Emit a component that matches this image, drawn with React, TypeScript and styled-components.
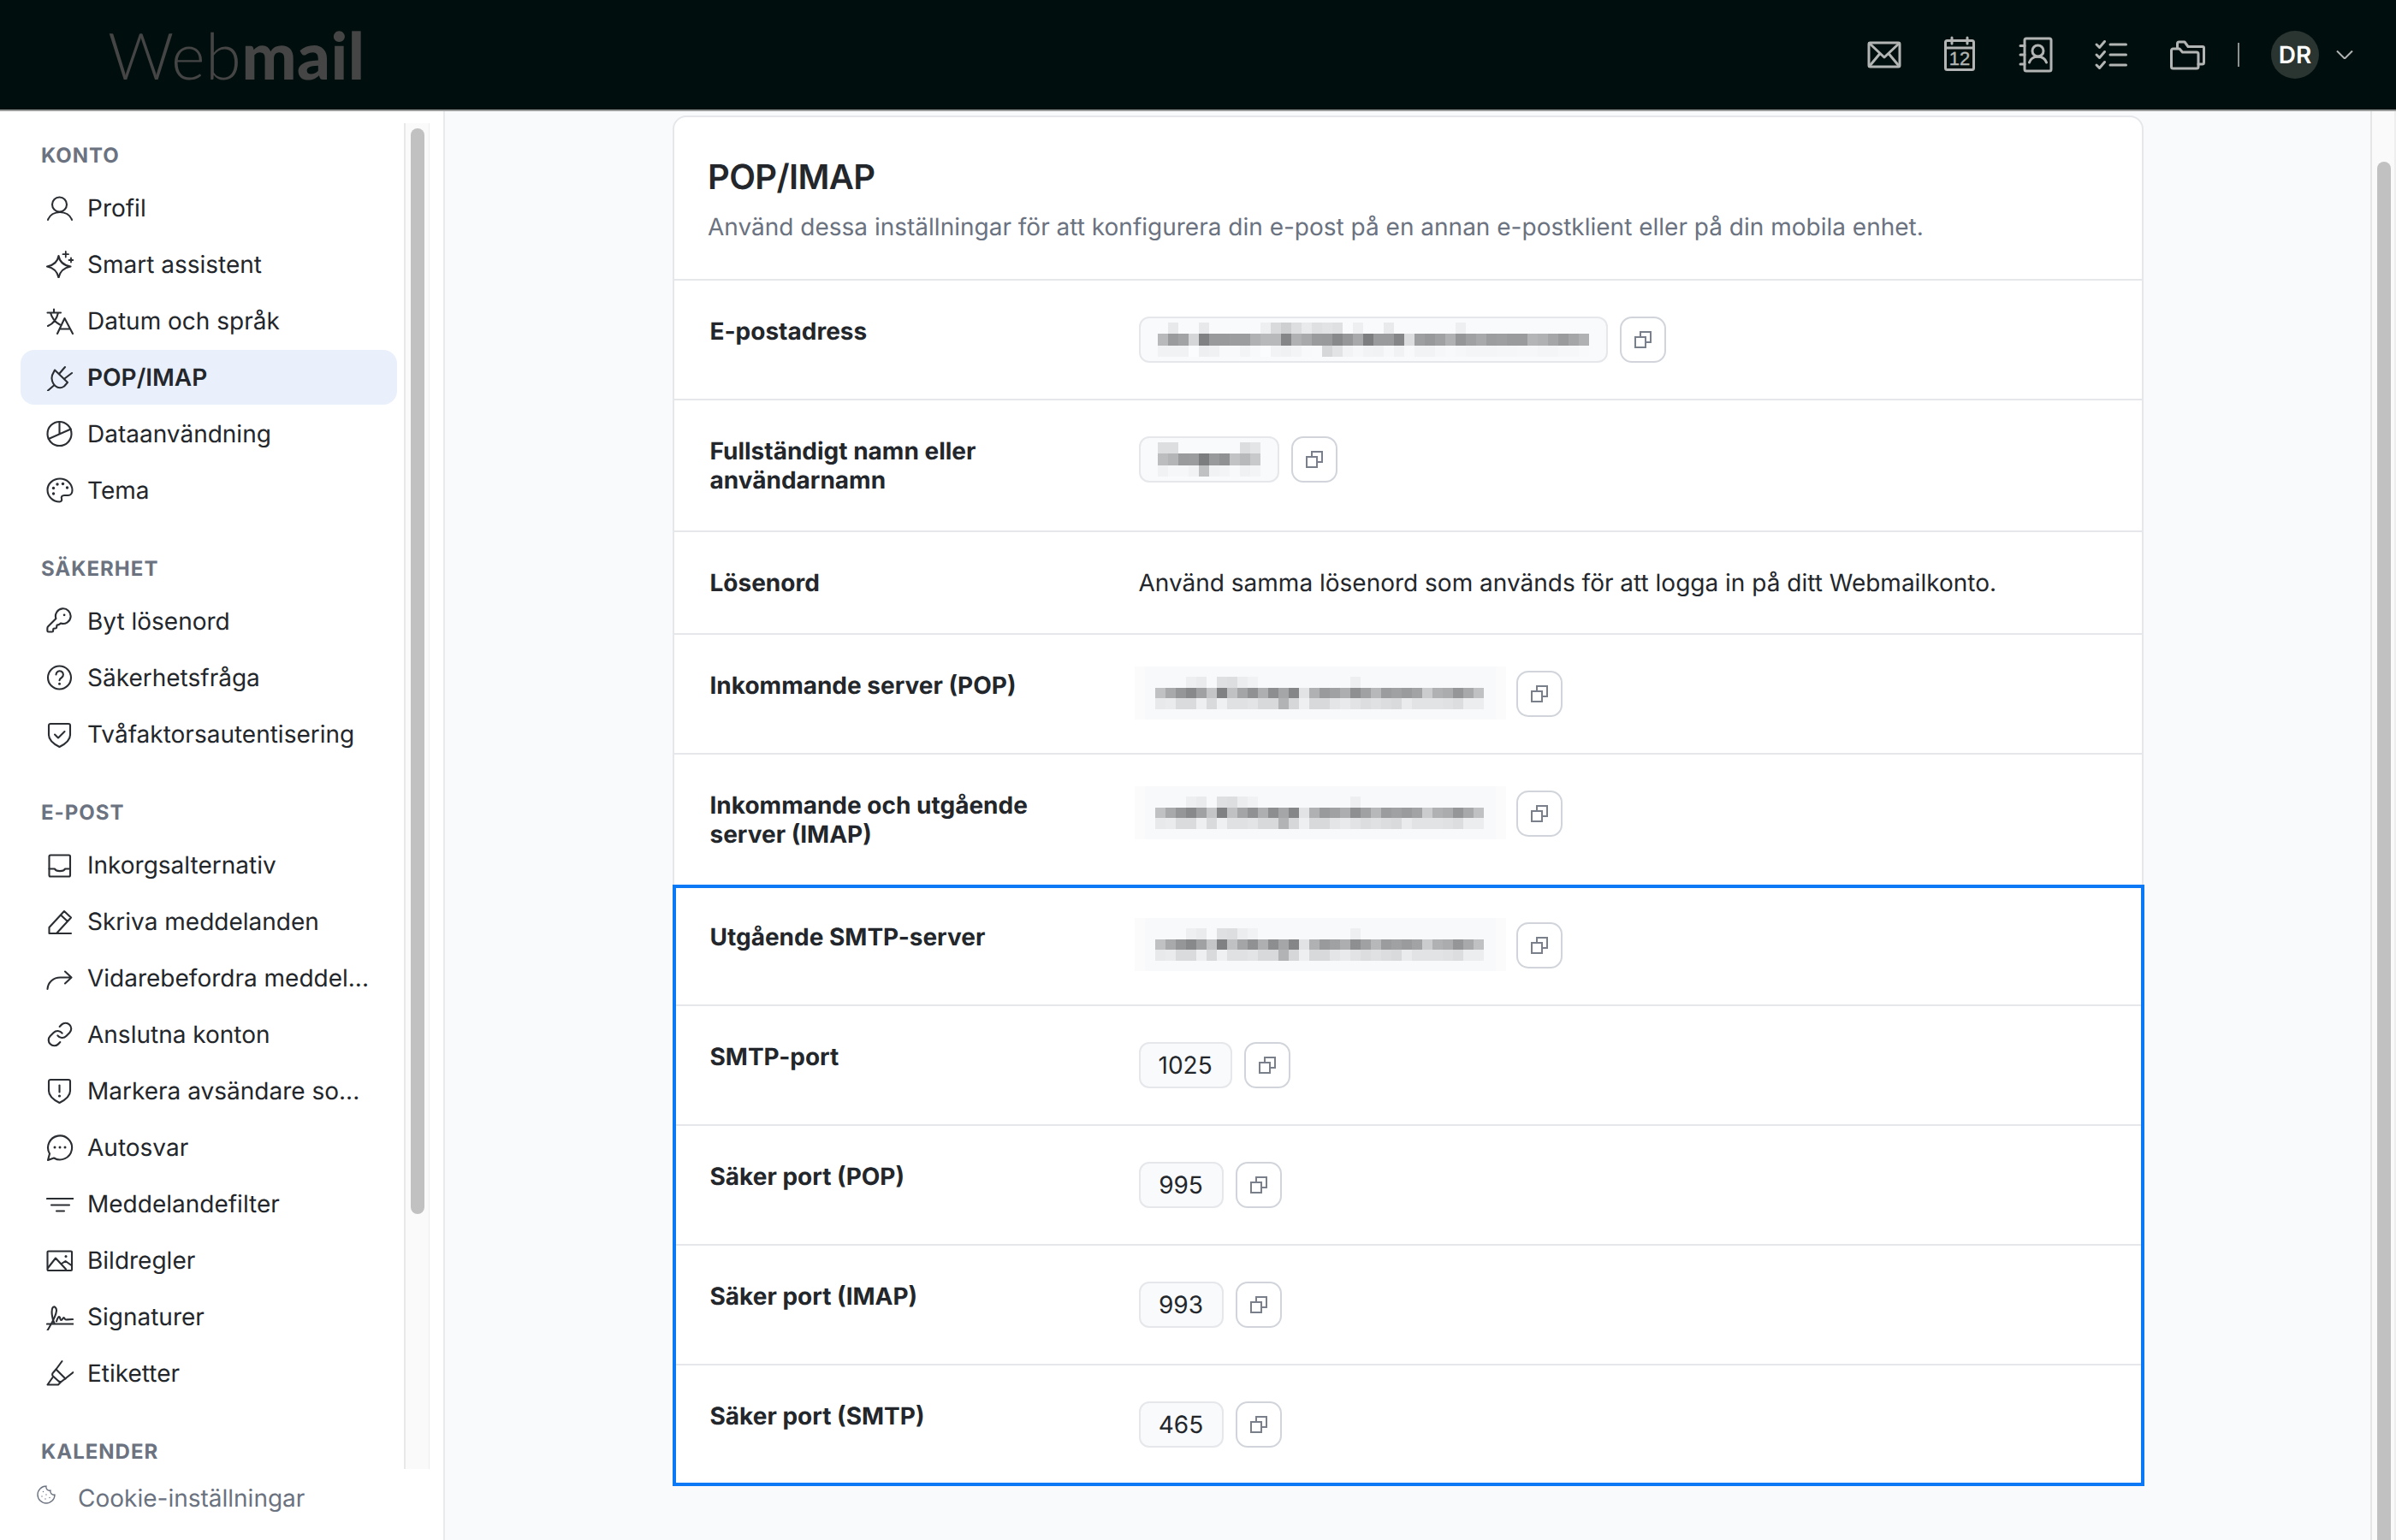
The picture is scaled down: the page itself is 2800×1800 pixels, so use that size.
import React from "react";
import styled, { createGlobalStyle } from "styled-components";

const Global = createGlobalStyle`
  html, body { margin: 0; padding: 0; background: #f9fafb; }
  body { font-family: Inter, "Liberation Sans", sans-serif; color: #23272b; text-rendering: geometricPrecision; }
  * { box-sizing: border-box; }
`;

const Page = styled.div`
  width: 2800px;
  height: 1800px;
  display: flex;
  flex-direction: column;
  overflow: hidden;
`;

const Header = styled.header`
  height: 130px;
  flex: none;
  background: #000f0d;
  border-bottom: 2px solid #999b9b;
  display: flex;
  align-items: center;
  justify-content: space-between;
  padding: 0 50px 0 126px;
`;

const Logo = styled.div`
  font-family: Lato, sans-serif;
  font-size: 76px;
  line-height: 1;
  color: #454545;
  font-weight: 300;
  letter-spacing: 0.5px;
  padding-top: 2px;
  b { font-weight: 900; }
`;

const Toolbar = styled.div`
  display: flex;
  align-items: center;
`;

const ToolIcon = styled.svg`
  width: 44px;
  height: 44px;
  margin-right: 44.5px;
  fill: none;
  stroke: #b2b5b3;
  stroke-width: 3;
  stroke-linecap: round;
  stroke-linejoin: round;
  text {
    fill: #b2b5b3;
    stroke: #b2b5b3;
    stroke-width: 0.4;
    font-family: "Liberation Sans Narrow", "Liberation Sans", sans-serif;
    font-size: 22px;
    font-weight: 400;
  }
`;

const ToolDivider = styled.div`
  width: 2px;
  height: 28px;
  background: #8c908e;
  margin: 0 37px 0 -7px;
`;

const Avatar = styled.div`
  width: 56px;
  height: 56px;
  border-radius: 50%;
  background: #2a3532;
  color: #fff;
  font-size: 28px;
  font-weight: 600;
  display: flex;
  align-items: center;
  justify-content: center;
`;

const Chevron = styled.svg`
  width: 20px;
  height: 10px;
  margin-left: 20px;
  fill: none;
  stroke: #b2b5b3;
  stroke-width: 2;
`;

const Body = styled.div`
  flex: 1;
  display: flex;
  min-height: 0;
`;

const Sidebar = styled.aside`
  width: 520px;
  flex: none;
  background: #fff;
  border-right: 2px solid #e8eaee;
  display: flex;
  flex-direction: column;
`;

const SideScroll = styled.div`
  flex: none;
  height: 1573px;
  margin-top: 14px;
  display: flex;
  overflow: hidden;
`;

const Nav = styled.nav`
  width: 472px;
  padding: 22px 8px 0 24px;
`;

const Section = styled.section`
  margin-bottom: 44px;
`;

const SectionTitle = styled.h3`
  margin: 0 0 13px;
  padding-left: 24px;
  font-size: 24px;
  line-height: 32px;
  font-weight: 700;
  letter-spacing: 1px;
  color: #6b7280;
`;

const NavItem = styled.a<{ $active?: boolean }>`
  height: 64px;
  margin-bottom: 2px;
  padding-left: 30px;
  display: flex;
  align-items: center;
  gap: 16px;
  border-radius: 16px;
  font-size: 28px;
  white-space: nowrap;
  font-weight: ${(p) => (p.$active ? 600 : 400)};
  background: ${(p) => (p.$active ? "#e9f0fb" : "transparent")};
  color: #23272b;
`;

const NavIcon = styled.svg`
  width: 32px;
  height: 32px;
  flex: none;
  fill: none;
  stroke: #2a2e33;
  stroke-width: 2.1;
  stroke-linecap: round;
  stroke-linejoin: round;
  circle.dot { fill: #2a2e33; stroke: none; }
`;

const SideTrack = styled.div`
  width: 30px;
  flex: none;
  background: #fafafa;
  border-left: 2px solid #e8e8e8;
  border-right: 1px solid #eeeeee;
  padding: 6px 0 0 6px;
`;

const Thumb = styled.div<{ $h: number }>`
  width: 16px;
  height: ${(p) => p.$h}px;
  border-radius: 8px;
  background: #c1c1c1;
`;

const SideFooter = styled.div`
  flex: 1;
  padding: 19px 0 0 42px;
  display: flex;
  align-items: flex-start;
  gap: 25px;
  font-size: 28px;
  line-height: 36px;
  color: #6b7280;
`;

const CookieIcon = styled.svg`
  width: 24px;
  height: 24px;
  flex: none;
  fill: none;
  stroke: #6b7280;
  stroke-width: 1.4;
  stroke-linecap: round;
  stroke-linejoin: round;
  margin-top: -1px;
`;

const FooterText = styled.span`
  margin-top: -3px;
`;

const Main = styled.main`
  flex: 1;
  min-width: 0;
  display: flex;
  background: #f9fafb;
`;

const Content = styled.div`
  flex: 1;
  padding: 5px 265px 0 266px;
`;

const MainTrack = styled.div`
  width: 30px;
  flex: none;
  background: #fafafa;
  border-left: 2px solid #e6e6e6;
  border-right: 2px solid #eeeeee;
  padding: 59px 0 0 6px;
`;

const Card = styled.div`
  background: #fff;
  border: 2px solid #e5e7eb;
  border-radius: 16px 16px 0 0;
`;

const CardHead = styled.div`
  padding: 46px 39px 41px;
  border-bottom: 2px solid #e5e7eb;
`;

const Title = styled.h1`
  margin: 0;
  font-size: 40px;
  line-height: 48px;
  font-weight: 600;
  letter-spacing: -0.6px;
  color: #23272b;
`;

const Subtitle = styled.p`
  margin: 14px 0 0;
  font-size: 28px;
  line-height: 40px;
  color: #6b7280;
`;

const Row = styled.div`
  display: grid;
  grid-template-columns: 501px 1fr;
  padding: 42px 42px 42px 41.5px;
  border-bottom: 2px solid #e5e7eb;
  &:last-child { border-bottom: 0; }
`;

const Highlight = styled.div`
  margin: 0 -3px -2px -2px;
  border: 4px solid #0b78f5;
  ${Row} { padding-left: 39.5px; }
  ${Row}:first-child { padding-top: 40px; }
  ${Row}:last-child { padding-bottom: 41px; }
`;

const Label = styled.div`
  font-size: 28px;
  line-height: 34px;
  font-weight: 650;
  color: #23272b;
  max-width: 420px;
`;

const Value = styled.div`
  display: flex;
  align-items: flex-start;
  gap: 14px;
  font-size: 28px;
  line-height: 34px;
  color: #23272b;
`;

const Pill = styled.div`
  height: 54px;
  min-width: 99px;
  padding: 0 20px;
  display: flex;
  align-items: center;
  justify-content: center;
  background: #f9fafb;
  border: 2px solid #e5e7eb;
  border-radius: 12px;
`;

const NumberPill = styled(Pill)`
  padding: 0 21px;
`;

const Pixelated = styled.div`
  margin: -5px -2px -3px -5px;
  line-height: 0;
`;

const CopyButton = styled.button`
  width: 54px;
  height: 54px;
  padding: 0;
  background: #fff;
  border: 2px solid #d1d5db;
  border-radius: 14px;
  display: flex;
  align-items: center;
  justify-content: center;
`;

const CopyIcon = styled.svg`
  width: 20px;
  height: 20px;
  fill: none;
  stroke: #7a7f8c;
  stroke-width: 2;
`;

const MosaicSvg = styled.svg`
  display: block;
  shape-rendering: crispEdges;
`;

const gray = (h: string) => {
  const v = parseInt(h, 16);
  return `rgb(${v},${Math.min(255, v + 1)},${Math.min(255, v + 3)})`;
};

const Mosaic = ({ rows, heights, x = 0, w, bg }: { rows: (string | null)[]; heights: number[]; x?: number; w: number; bg?: boolean }) => {
  const total = heights.reduce((a, b) => a + b, 0);
  let y = 0;
  return (
    <MosaicSvg width={w} height={total} viewBox={`0 0 ${w} ${total}`}>
      {bg && <rect width={w} height={total} fill="#f8f9fa" />}
      {bg && <rect width={12} height={total} fill="#fbfbfc" />}
      {bg && <rect x={w - 12} width={12} height={total} fill="#fbfbfc" />}
      {rows.map((r, i) => {
        const top = y;
        y += heights[i];
        if (!r) return null;
        return r.split(" ").map((h, c) =>
          h === "--" ? null : <rect key={`${i}-${c}`} x={x + c * 12} y={top} width={12} height={heights[i]} fill={gray(h)} />
        );
      })}
    </MosaicSvg>
  );
};

const emailRows = [
  "-- e8 -- -- e8 -- -- -- -- -- ee d9 ce dd e9 df e2 df -- ee -- -- e9 -- -- -- -- -- -- ee",
  "b8 9a a2 d5 80 99 99 9c 9c b0 b8 b8 85 b0 a8 9a 99 88 96 a8 7d 9a 9a 85 dc 9e 98 a0 b0 95 a0 a8 9c 9e 9a 9a b4 b0 a5 9a a5 b0",
  "f1 f1 f1 fb ee f0 f8 f8 f3 f8 fb f2 f0 f3 f8 f9 d6 e2 f2 f6 f2 f1 f7 f1 f8 f2 f2 f6 f8 f6 f4 f4 f4 f5 f5 f6 f6 f4 f4 f6 f6 f8",
];
const nameRows = [
  "dd dd -- -- -- -- -- -- dc e4",
  "bc b4 9a 9b 7c 99 90 c2 b8 c8",
  "f1 f6 f6 f1 c0 f1 f3 f8 f0 f3",
];
const serverRows = [
  null,
  "-- -- -- ee ea -- df dd ec f1 -- -- -- -- -- -- -- -- -- ee",
  "c0 a8 95 88 a0 c4 80 c0 a4 90 ae 8d a5 85 e2 b0 99 a0 ad 8e a0 b7 9b a0 9a a2 cb b0 ab 95 a8 c0",
  "e8 ea da da ee d9 ef e0 e0 e3 d8 d8 b2 d6 ee d8 d8 e4 e9 e2 dc e0 dc d9 ea e2 e2 e2 e0 dc ec ec",
  null,
];

const EmailMask = () => <Mosaic rows={emailRows} heights={[13, 14, 13]} w={504} />;
const NameMask = () => <Mosaic rows={nameRows} heights={[13, 14, 13]} w={120} />;
const ServerMask = () => (
  <Pixelated>
    <Mosaic rows={serverRows} heights={[12, 13, 12, 13, 12]} x={24} w={434} bg />
  </Pixelated>
);

const Copy = () => (
  <CopyButton aria-label="Kopiera">
    <CopyIcon viewBox="0 0 20 20">
      <rect x="1" y="7" width="12" height="12" />
      <path d="M7 6.5V1h12v12h-5.5" />
    </CopyIcon>
  </CopyButton>
);

const icons: Record<string, React.ReactNode> = {
  user: (
    <>
      <circle cx="15.5" cy="12" r="8.5" />
      <path d="M2 30c2-5.500 7.500-9 14-9s12 3.500 14 9" />
    </>
  ),
  sparkle: (
    <>
      <path d="M14.500 6c1 6.500 5 11 14 12.500-8 1.500-12.500 5.500-14 13-1.500-7.500-6-11.500-13.500-13C9 17 13.500 12.500 14.500 6Z" />
      <path d="M22.800 1v6.500M19.500 4.200H26M29 8.500v5M26.500 11h5" strokeWidth="1.800" />
    </>
  ),
  lang: (
    <>
      <path d="M1.500 6.500H17M9 2.500v4M14 6.500C12.500 13.500 8 19.500 2 22M5 6.500c1.500 6 5.500 11 11 14" />
      <path d="M13 31l8.500-18L31 31M16 25.500h12" />
    </>
  ),
  plug: (
    <>
      <path d="M10 7.500L25 22l-4 4.500c-3.500 2.500-7.500 2-10.500-.5S5.500 18 7 13.500Z" />
      <path d="M15.500 11.500L22 4M21.500 17.500L30 11M9 25.500L2 31.500" />
    </>
  ),
  pie: (
    <>
      <circle cx="15.500" cy="16" r="14" />
      <path d="M15.500 2v14.500M2.800 22L28.800 10.500" />
    </>
  ),
  palette: (
    <>
      <path d="M16 2.500C8 2.500 1.500 8.500 1.500 15.500 1.500 23.500 8 29.500 15.500 29.500c2.500 0 3-2 2.500-3.500-.8-2.200.5-4 3-4h4.500c3 0 5-2.500 5-6C30.500 8.500 24 2.500 16 2.500Z" />
      <circle className="dot" cx="8.500" cy="13.500" r="1.700" />
      <circle className="dot" cx="8.500" cy="20" r="1.700" />
      <circle className="dot" cx="13" cy="9" r="1.700" />
      <circle className="dot" cx="19.500" cy="8.500" r="1.700" />
      <circle className="dot" cx="24.500" cy="13" r="1.700" />
    </>
  ),
  key: (
    <g transform="scale(1.36) translate(-1 -1)" strokeWidth="1.550">
      <path d="M2.586 17.414A2 2 0 0 0 2 18.828V21a1 1 0 0 0 1 1h3a1 1 0 0 0 1-1v-1a1 1 0 0 1 1-1h1a1 1 0 0 0 1-1v-1a1 1 0 0 1 1-1h.172a2 2 0 0 0 1.414-.586l.814-.814a6.500 6.500 0 1 0-4-4z" />
      <circle className="dot" cx="16.500" cy="7.500" r="1" />
    </g>
  ),
  help: (
    <>
      <circle cx="15.500" cy="16" r="13.500" />
      <path d="M11.500 12.500a4.200 4.200 0 1 1 6.500 3.500c-1.500 1-2.500 1.700-2.500 3.300" />
      <circle className="dot" cx="15.500" cy="23.300" r="1.500" />
    </>
  ),
  shieldCheck: (
    <>
      <path d="M5 4h21a2 2 0 0 1 2 2v11c0 7-7.500 11.500-12.500 14C10.500 28.500 3 24 3 17V6a2 2 0 0 1 2-2Z" />
      <path d="M10 16.500l4 4 7.500-7.500" />
    </>
  ),
  shieldAlert: (
    <>
      <path d="M5 3h21a2 2 0 0 1 2 2v11c0 7-7.500 11.500-12.500 14C10.500 27.500 3 23 3 16V5a2 2 0 0 1 2-2Z" />
      <path d="M15.500 9.500v8" />
      <circle className="dot" cx="15.500" cy="22" r="1.600" />
    </>
  ),
  inbox: (
    <>
      <rect x="3.500" y="4.500" width="24.500" height="25" rx="1.500" />
      <path d="M3.500 20.500H10c1.500 3.500 10.500 3.500 12 0h6" />
    </>
  ),
  pencil: (
    <path d="M3.500 30v-7L21 4l8 7.500L12 30H29M3.500 30H12M17 8.500l8 7.500" />
  ),
  forward: <path d="M1.500 29c.5-8 7-13.500 15-13.500h12.500M22 8.500l7.500 7-7.500 7" />,
  link: (
    <g transform="scale(1.333)" strokeWidth="1.600">
      <path d="M10 13a5 5 0 0 0 7.540.54l3-3a5 5 0 0 0-7.070-7.070l-1.720 1.710" />
      <path d="M14 11a5 5 0 0 0-7.540-.54l-3 3a5 5 0 0 0 7.070 7.070l1.710-1.710" />
    </g>
  ),
  message: (
    <>
      <path d="M2 31l2-7.500A14 14 0 1 1 9 28.500L2 31Z" />
      <circle className="dot" cx="10" cy="16" r="1.500" />
      <circle className="dot" cx="16" cy="16" r="1.500" />
      <circle className="dot" cx="22" cy="16" r="1.500" />
    </>
  ),
  filter: <path d="M1 10h30.500M6 17.500h21M12 24.500h9" />,
  image: (
    <>
      <rect x="1.500" y="5.500" width="28.500" height="22.500" rx="1" />
      <path d="M2 25l9-11.500 12 13M18 20l4.500-3 7 5" />
      <circle className="dot" cx="23" cy="11.500" r="1.500" />
    </>
  ),
  signature: (
    <>
      <path d="M1 24.500h30.500M1.500 32c4-7 10-16 10.500-23 .2-4-3-6-4.500-3.500C5.500 9 7 19 9.500 23.500" />
      <path d="M12 21.500c1-4 3-7 4-4.500.5 1.500.5 3 1.500 3 1.500 0 2-3 3-3s1 2.500 2.500 2.500 2.500-.5 8-.5" />
    </>
  ),
  highlighter: (
    <>
      <path d="M7.500 21L1.500 29.500H14l3.500-3.500" />
      <path d="M18.500 2l-7 9.500-3.500 4c-1.300 1.300-1 3 0 4l6 5.500c1.500 1.500 3 1.500 4.500.3l3-2.300 10-8" />
      <path d="M11.500 11.500l11 11" />
    </>
  ),
};

type Item = { icon: string; text: string; active?: boolean };
const sections: { title: string; items: Item[] }[] = [
  {
    title: "KONTO",
    items: [
      { icon: "user", text: "Profil" },
      { icon: "sparkle", text: "Smart assistent" },
      { icon: "lang", text: "Datum och språk" },
      { icon: "plug", text: "POP/IMAP", active: true },
      { icon: "pie", text: "Dataanvändning" },
      { icon: "palette", text: "Tema" },
    ],
  },
  {
    title: "SÄKERHET",
    items: [
      { icon: "key", text: "Byt lösenord" },
      { icon: "help", text: "Säkerhetsfråga" },
      { icon: "shieldCheck", text: "Tvåfaktorsautentisering" },
    ],
  },
  {
    title: "E-POST",
    items: [
      { icon: "inbox", text: "Inkorgsalternativ" },
      { icon: "pencil", text: "Skriva meddelanden" },
      { icon: "forward", text: "Vidarebefordra meddel..." },
      { icon: "link", text: "Anslutna konton" },
      { icon: "shieldAlert", text: "Markera avsändare so..." },
      { icon: "message", text: "Autosvar" },
      { icon: "filter", text: "Meddelandefilter" },
      { icon: "image", text: "Bildregler" },
      { icon: "signature", text: "Signaturer" },
      { icon: "highlighter", text: "Etiketter" },
    ],
  },
  { title: "KALENDER", items: [] },
];

const Field = ({ label, children }: { label: string; children: React.ReactNode }) => (
  <Row>
    <Label>{label}</Label>
    <Value>{children}</Value>
  </Row>
);

export default function App() {
  return (
    <Page>
      <Global />
      <Header>
        <Logo>
          Web<b>mail</b>
        </Logo>
        <Toolbar>
          <ToolIcon viewBox="0 0 44 44">
            <rect x="4" y="8" width="36" height="28" rx="1.500" />
            <path d="M4.500 8.500L22 25 39.500 8.500M4.500 35.500L17 20.500M39.500 35.500L27 20.500" />
          </ToolIcon>
          <ToolIcon viewBox="0 0 44 44">
            <rect x="5.500" y="5.500" width="33" height="34" rx="2" />
            <path d="M5.500 14h33M13 2v7M31 2v7" />
            <text x="22" y="34" textAnchor="middle">12</text>
          </ToolIcon>
          <ToolIcon viewBox="0 0 44 44">
            <rect x="9" y="3" width="31" height="38" rx="2" />
            <path d="M4 11.500h5M4 22h5M4 33h5" />
            <circle cx="24.500" cy="17.500" r="6.500" />
            <path d="M14.500 31c2.500-9 17-9 20 0" />
          </ToolIcon>
          <ToolIcon viewBox="0 0 44 44">
            <path d="M5 10l3.500 3.500L14.500 6.500M5 22l3.500 3.500 6-7M5 34l3.500 3.500 6-7M21 10h18.500M21 22h18.500M21 34h18.500" />
          </ToolIcon>
          <ToolIcon viewBox="0 0 44 44">
            <path d="M3.500 36V17a2 2 0 0 1 2-2h7.500l3.500 4H33a2 2 0 0 1 2 2v15a2 2 0 0 1-2 2H5.500a2 2 0 0 1-2-2Z" />
            <path d="M10.500 14V9a2 2 0 0 1 2-2h6.500l4 5.500h17a1.500 1.500 0 0 1 1.500 1.500v17a2 2 0 0 1-2 2H35" />
          </ToolIcon>
          <ToolDivider />
          <Avatar>DR</Avatar>
          <Chevron viewBox="0 0 20 10">
            <path d="M1 0.500L10 9.500 19 0.500" />
          </Chevron>
        </Toolbar>
      </Header>
      <Body>
        <Sidebar>
          <SideScroll>
            <Nav>
              {sections.map((s) => (
                <Section key={s.title}>
                  <SectionTitle>{s.title}</SectionTitle>
                  {s.items.map((it) => (
                    <NavItem key={it.text} $active={it.active}>
                      <NavIcon viewBox="0 0 32 32">{icons[it.icon]}</NavIcon>
                      {it.text}
                    </NavItem>
                  ))}
                </Section>
              ))}
            </Nav>
            <SideTrack>
              <Thumb $h={1269} />
            </SideTrack>
          </SideScroll>
          <SideFooter>
            <CookieIcon viewBox="0 0 24 24">
              <path d="M12 2a10 10 0 1 0 10 10 4 4 0 0 1-5-5 4 4 0 0 1-5-5" />
              <path d="M8.500 8.500v.01M16 15.500v.01M12 12v.01M11 17v.01M7 14v.01" />
            </CookieIcon>
            <FooterText>Cookie-inställningar</FooterText>
          </SideFooter>
        </Sidebar>
        <Main>
          <Content>
            <Card>
              <CardHead>
                <Title>POP/IMAP</Title>
                <Subtitle>Använd dessa inställningar för att konfigurera din e-post på en annan e-postklient eller på din mobila enhet.</Subtitle>
              </CardHead>
              <div>
                <Field label="E-postadress">
                  <Pill><EmailMask /></Pill>
                  <Copy />
                </Field>
                <Field label="Fullständigt namn eller användarnamn">
                  <Pill><NameMask /></Pill>
                  <Copy />
                </Field>
                <Field label="Lösenord">Använd samma lösenord som används för att logga in på ditt Webmailkonto.</Field>
                <Field label="Inkommande server (POP)">
                  <ServerMask />
                  <Copy />
                </Field>
                <Field label="Inkommande och utgående server (IMAP)">
                  <ServerMask />
                  <Copy />
                </Field>
              </div>
              <Highlight>
                <Field label="Utgående SMTP-server">
                  <ServerMask />
                  <Copy />
                </Field>
                <Field label="SMTP-port">
                  <NumberPill>1025</NumberPill>
                  <Copy />
                </Field>
                <Field label="Säker port (POP)">
                  <NumberPill>995</NumberPill>
                  <Copy />
                </Field>
                <Field label="Säker port (IMAP)">
                  <NumberPill>993</NumberPill>
                  <Copy />
                </Field>
                <Field label="Säker port (SMTP)">
                  <NumberPill>465</NumberPill>
                  <Copy />
                </Field>
              </Highlight>
            </Card>
          </Content>
          <MainTrack>
            <Thumb $h={1700} />
          </MainTrack>
        </Main>
      </Body>
    </Page>
  );
}
